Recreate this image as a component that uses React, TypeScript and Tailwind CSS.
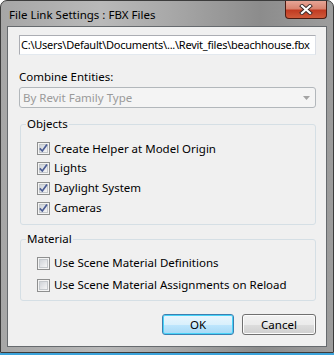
import React from "react";

const font = { fontFamily: '"Noto Sans", "Open Sans", sans-serif' };

function CheckBox({ checked }: { checked: boolean }) {
  return (
    <span className="flex h-[13px] w-[13px] shrink-0 items-center justify-center border border-[#8e8f8f] bg-[#f4f4f4]">
      <span className="flex h-[9px] w-[9px] items-center justify-center border border-[#c4c8cc] bg-gradient-to-br from-[#d0d4d9] to-[#f5f5f6]">
        {checked && (
          <svg width="9" height="9" viewBox="0 0 9 9" className="overflow-visible">
            <path d="M0.8 4.4 L3.3 7 L8 0.6" fill="none" stroke="#4b5c94" strokeWidth="1.7" />
          </svg>
        )}
      </span>
    </span>
  );
}

function Row({ label, checked, h }: { label: string; checked: boolean; h: string }) {
  return (
    <div className={`flex items-center gap-[4px] pl-[16px] ${h}`}>
      <CheckBox checked={checked} />
      <span className="text-[11.5px] leading-[14px] text-black">{label}</span>
    </div>
  );
}

export default function App() {
  return (
    <div className="flex h-[356px] w-[334px] flex-col" style={font}>
      <div className="flex h-[353px] flex-col rounded-t-[7px] border border-[#3c3c3c] bg-[linear-gradient(90deg,#a6a6a6_0%,#b9b9b9_30%,#a9a9a9_50%,#8c8c8c_78%,#9d9d9d_100%)] px-[6px] pb-[5px]">
        {/* title bar */}
        <div className="flex h-[25px] items-start justify-between">
          <span className="pl-[2px] pt-[7px] text-[11.5px] leading-[14px] text-black">
            File Link Settings : FBX Files
          </span>
          <div className="flex h-[18px] w-[42px] items-center justify-center rounded-b-[4px] border border-t-0 border-[#4a1b12] bg-[linear-gradient(180deg,#e6a596_0%,#d98470_45%,#c13b22_55%,#cf5a3a_100%)]">
            <svg width="14" height="11" viewBox="0 0 14 11">
              <path d="M3 2 L11 9 M11 2 L3 9" stroke="#3a2a28" strokeWidth="4" strokeLinecap="square" />
              <path d="M3 2 L11 9 M11 2 L3 9" stroke="#ffffff" strokeWidth="2.2" strokeLinecap="square" />
            </svg>
          </div>
        </div>

        {/* client area */}
        <div className="flex flex-1 flex-col border border-[#666a6e] bg-[#f0f0f0] pl-[11px] pr-[9px] pt-[8px]">
          <div className="flex h-[20px] w-[297px] items-center overflow-hidden whitespace-nowrap border border-[#abadb3] border-b-[#e3e9ef] border-r-[#dbdfe6] bg-white pl-[1px] text-[11px] leading-[14px] tracking-[-0.25px] text-black">
            C:\Users\Default\Documents\...\Revit_files\beachhouse.fbx
          </div>

          <div className="mt-[15px] text-[11.5px] leading-[14px] text-black">Combine Entities:</div>

          <div className="mt-[3px] flex h-[21px] w-[297px] items-center justify-between rounded-[3px] border border-[#b2b7bb] bg-[#f4f4f4] pl-[3px] pr-[5px]">
            <span className="text-[11.5px] leading-[14px] text-[#9a9a9a]">By Revit Family Type</span>
            <svg width="7" height="4" viewBox="0 0 7 4">
              <path d="M0 0 H7 L3.5 4 Z" fill="#a3a3a3" />
            </svg>
          </div>

          <fieldset className="ml-[1px] mt-[9px] w-[296px] rounded-[3px] border border-[#d5dfe5] pb-[6px] pt-[8px]">
            <legend className="ml-[5px] px-[1px] text-[11.5px] leading-[14px] text-black">Objects</legend>
            <Row label="Create Helper at Model Origin" checked h="h-[19px]" />
            <Row label="Lights" checked h="h-[20px]" />
            <Row label="Daylight System" checked h="h-[20px]" />
            <Row label="Cameras" checked h="h-[20px]" />
          </fieldset>

          <fieldset className="ml-[1px] mt-[7px] w-[296px] rounded-[3px] border border-[#d5dfe5] pb-[4px] pt-[6px]">
            <legend className="ml-[5px] px-[1px] text-[11.5px] leading-[14px] text-black">Material</legend>
            <Row label="Use Scene Material Definitions" checked={false} h="h-[22px]" />
            <Row label="Use Scene Material Assignments on Reload" checked={false} h="h-[22px]" />
          </fieldset>

          <div className="mt-[13px] flex w-[297px] justify-end gap-[8px]">
            <button className="h-[21px] w-[72px] rounded-[3px] border border-[#3c7fb1] bg-[linear-gradient(180deg,#eaf6fd_0%,#d9f0fc_50%,#bee6fd_51%,#a7d9f5_100%)] text-[11.5px] leading-[14px] text-black shadow-[inset_0_0_0_1px_#48d3f8]">
              OK
            </button>
            <button className="h-[21px] w-[74px] rounded-[3px] border border-[#707070] bg-[linear-gradient(180deg,#f2f2f2_0%,#ebebeb_50%,#dddddd_51%,#cfcfcf_100%)] text-[11.5px] leading-[14px] text-black shadow-[inset_0_0_0_1px_#fcfcfc]">
              Cancel
            </button>
          </div>
        </div>
      </div>
      <div className="h-[2px] bg-[#3aa2da]" />
    </div>
  );
}
